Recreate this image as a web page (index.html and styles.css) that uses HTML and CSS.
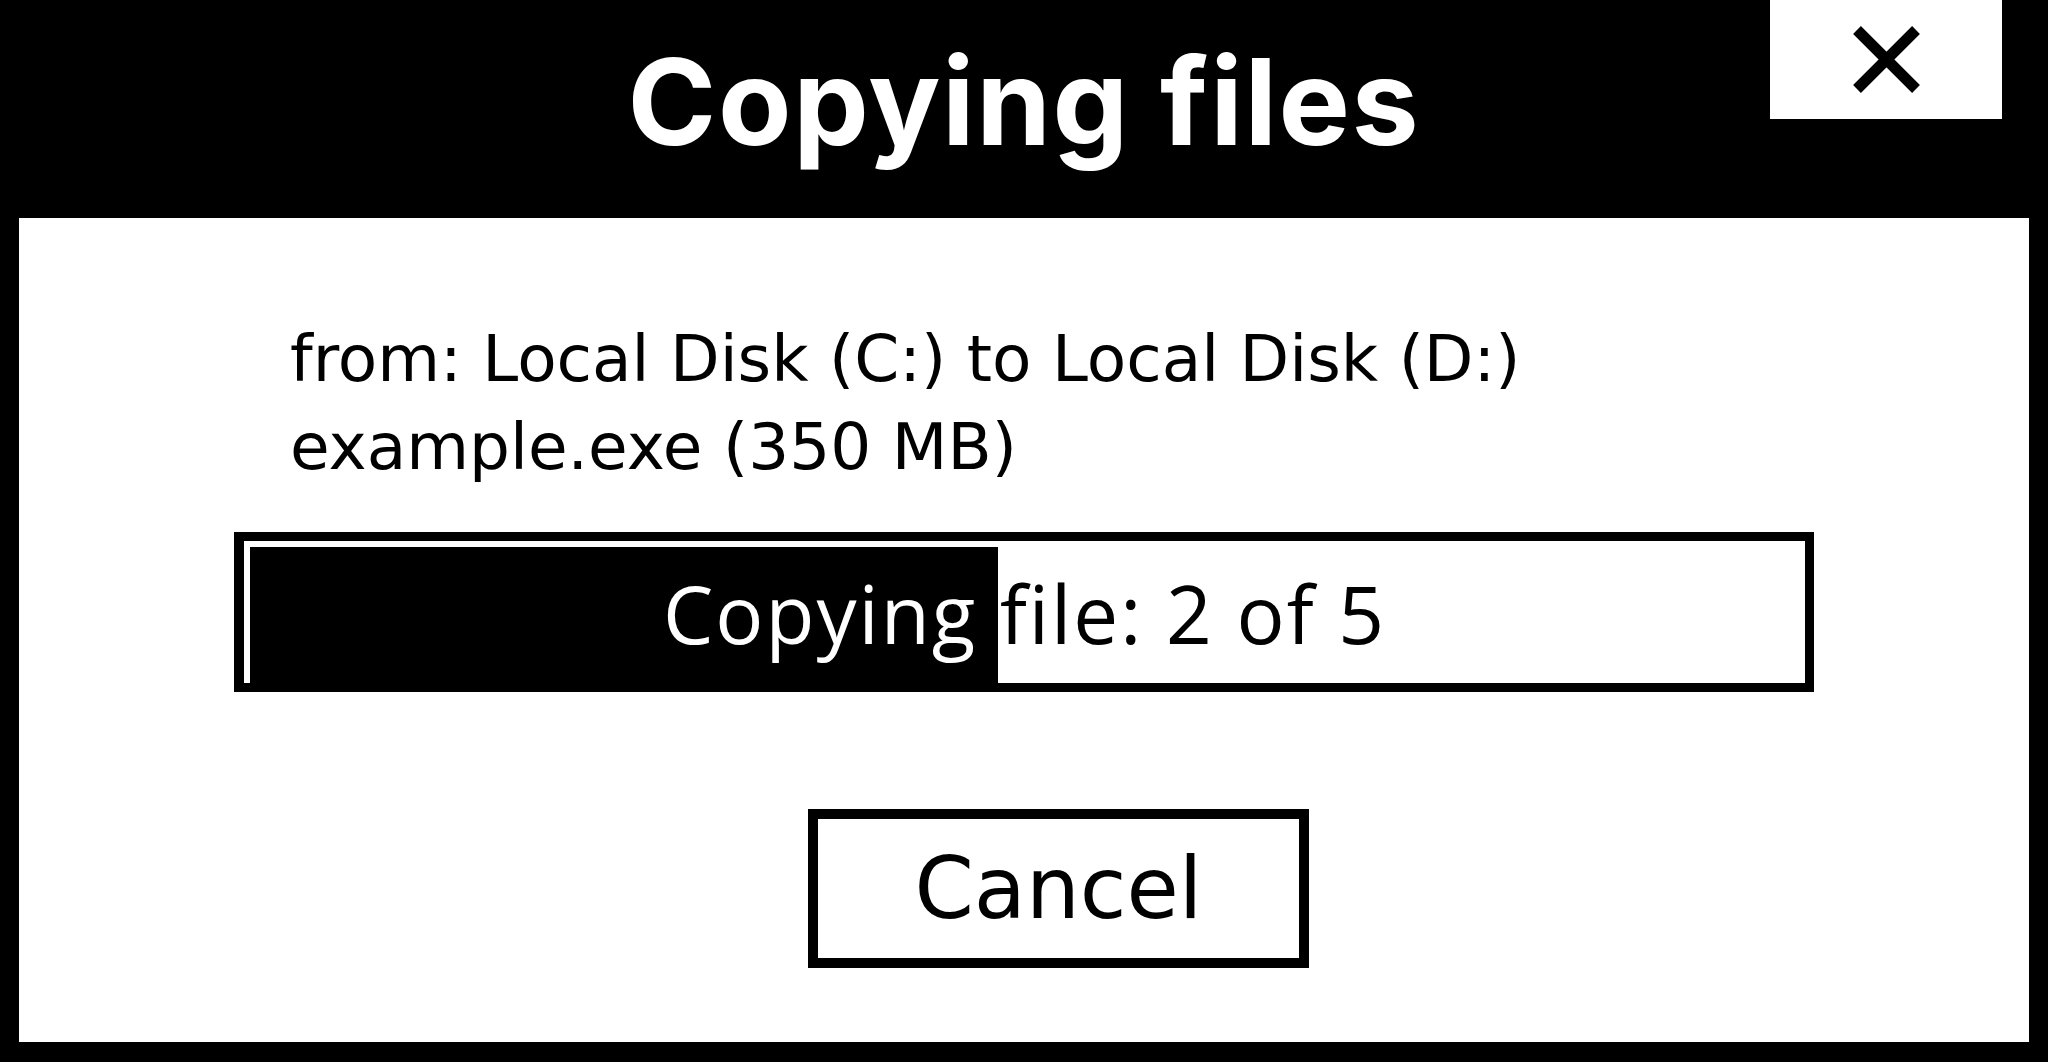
FILE: index.html
```html
<!DOCTYPE html>
<html lang="en">
<head>
    <meta charset="UTF-8">
    <meta name="viewport" content="width=device-width, initial-scale=1.0">
    <title>Copying files</title>
    <link rel="stylesheet" href="styles.css">
</head>
<body>
    <div class="window">
        <div class="titlebar">
            <h1 class="title">Copying files</h1>
            <button class="close" aria-label="Close">
                <svg width="67" height="67" viewBox="0 0 67 67">
                    <line x1="4" y1="4" x2="63" y2="63" stroke="#000" stroke-width="11"/>
                    <line x1="63" y1="4" x2="4" y2="63" stroke="#000" stroke-width="11"/>
                </svg>
            </button>
        </div>

        <div class="content">
            <div class="details">
                <div>from: Local Disk (C:) to Local Disk (D:)</div>
                <div>example.exe (350 MB)</div>
            </div>

            <!-- Progress bar -->
            <div class="progress">
                <div class="progress-track">
                    <div class="progress-fill" style="width: 748px;"></div>
                    <div class="progress-label">Copying file: 2 of 5</div>
                </div>
            </div>

            <button class="cancel">Cancel</button>
        </div>
    </div>
</body>
</html>
```

FILE: styles.css
```css
body {
    margin: 0;
    padding: 0;
    font-family: "DejaVu Sans", sans-serif;
    background-color: #000;
}

.window {
    height: 100vh;
    box-sizing: border-box;
    padding: 0 19px 20px 19px;
    display: flex;
    flex-direction: column;
    background-color: #000;
}

.titlebar {
    height: 218px;
    flex-shrink: 0;
    display: grid;
    grid-template-columns: 1fr auto 1fr;
}

.title {
    grid-column: 2;
    margin: 42px 0 0 0;
    color: #fff;
    font-family: Inter, sans-serif;
    font-size: 120px;
    font-weight: 700;
    letter-spacing: 1.6px;
    line-height: 1;
    align-self: start;
}

.close {
    grid-column: 3;
    justify-self: end;
    align-self: start;
    width: 232px;
    height: 119px;
    margin-right: 27px;
    padding: 0;
    border: none;
    background-color: #fff;
    display: flex;
    align-items: center;
    justify-content: center;
    cursor: pointer;
}

.close svg {
    display: block;
}

.content {
    flex: 1;
    background-color: #fff;
    display: flex;
    flex-direction: column;
    padding-top: 97px;
}

.details {
    margin-left: 271px;
    font-size: 64.5px;
    line-height: 88px;
    color: #000;
}

.progress {
    margin: 41px 215px 0 215px;
    height: 160px;
    box-sizing: border-box;
    border: 9px solid #000;
    border-left-width: 10px;
    background-color: #fff;
}

.progress-track {
    height: 100%;
    display: grid;
    isolation: isolate;
    background-color: #fff;
}

.progress-fill {
    grid-area: 1 / 1;
    margin: 6px 0 0 6px;
    background-color: #000;
}

.progress-label {
    grid-area: 1 / 1;
    justify-self: center;
    align-self: center;
    font-family: "Open Sans", sans-serif;
    font-size: 80px;
    letter-spacing: 2px;
    color: #fff;
    mix-blend-mode: difference;
}

.cancel {
    align-self: flex-start;
    margin: 117px 0 0 789px;
    width: 501px;
    height: 159px;
    box-sizing: border-box;
    border: 10px solid #000;
    background-color: #fff;
    font-family: "DejaVu Sans", sans-serif;
    font-size: 85px;
    color: #000;
    padding: 0;
    cursor: pointer;
}
```
